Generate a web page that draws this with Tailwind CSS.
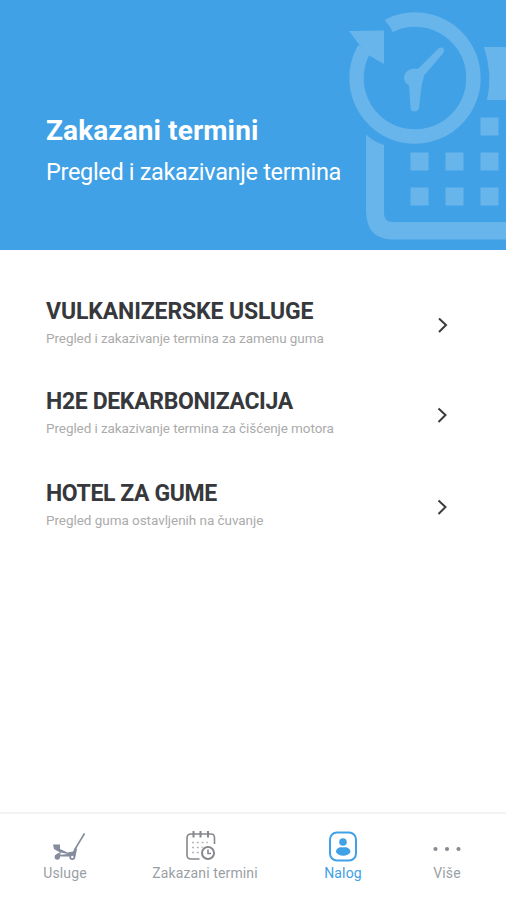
<!DOCTYPE html>
<html lang="sr">
<head>
<meta charset="utf-8">
<title>Zakazani termini</title>
<script src="https://cdn.jsdelivr.net/npm/@tailwindcss/browser@4"></script>
</head>
<body class="bg-white font-['Roboto',sans-serif]">
<div class="flex h-[900px] w-[506px] flex-col overflow-hidden bg-white">
  <header class="relative h-[250px] shrink-0 bg-[#40a1e6] pl-[46px] pt-[113px] text-white">
    <svg class="absolute right-0 top-0" width="176" height="250" viewBox="330 0 176 250" fill="#68b5ec">
      <path d="M389.500 25.400A58.500 58.500 0 1 1 364.500 48.500" fill="none" stroke="#68b5ec" stroke-width="14.400"/>
      <path d="M384.500 20L394 31.500L400 28L392 17Z"/>
      <path d="M349 31L384 30.500V64L370 56L358 43Z"/>
      <path d="M438.500 48.500Q441.500 46.500 443.500 48.500Q445 51 443 53.500L424 75.500Q423.500 80 421.800 84L419 108Q418 111.500 414.500 111.500Q411 111.500 410.500 108L409 85.500Q403.500 82 404 76.500Q405.500 69 415 68.500L418 69Z"/>
      <path d="M366 134.500Q374 142 384 145V213Q384 222 393 222H506V239.500H392Q366 239 366 210Z"/>
      <path d="M484 47H506V100H487Q493 74 484 47Z"/>
      <path d="M480.500 117.500h18v18h-18zM410.500 152.500h18v18h-18zM445.500 152.500h18v18h-18zM480.500 152.500h18v18h-18zM410.500 187.500h18v18h-18zM445.500 187.500h18v18h-18zM480.500 187.500h18v18h-18z"/>
    </svg>
    <h1 class="relative text-[28px] font-bold leading-[35px] tracking-[0.1px]">Zakazani termini</h1>
    <p class="relative mt-[7px] text-[23.500px] leading-[34px] tracking-[-0.33px]">Pregled i zakazivanje termina</p>
  </header>

  <main class="flex grow flex-col pl-[46px] pr-[56px] pt-[47px]">
    <a class="flex h-[90px] justify-between">
      <div>
        <h2 class="text-[23px] font-bold leading-[30px] tracking-[-0.13px] text-[#36383c]">VULKANIZERSKE USLUGE</h2>
        <p class="mt-px text-[13.500px] leading-5 tracking-[-0.08px] text-[#ababab]">Pregled i zakazivanje termina za zamenu guma</p>
      </div>
      <svg class="mt-[20px]" width="14" height="16" viewBox="0 0 14 16" fill="none" stroke="#3a3b3e" stroke-width="2"><path d="M3 1.500L10 8L3 15"/></svg>
    </a>
    <a class="flex h-[92px] justify-between">
      <div>
        <h2 class="text-[23px] font-bold leading-[30px] tracking-[-0.35px] text-[#36383c]">H2E DEKARBONIZACIJA</h2>
        <p class="mt-px text-[13.500px] leading-5 tracking-[-0.08px] text-[#ababab]">Pregled i zakazivanje termina za čišćenje motora</p>
      </div>
      <svg class="mt-[20px]" width="14" height="16" viewBox="0 0 14 16" fill="none" stroke="#3a3b3e" stroke-width="2"><path d="M2.500 1.500L9.500 8L2.500 15"/></svg>
    </a>
    <a class="flex justify-between">
      <div>
        <h2 class="text-[23px] font-bold leading-[30px] tracking-[-0.4px] text-[#36383c]">HOTEL ZA GUME</h2>
        <p class="mt-px text-[13.500px] leading-5 tracking-[-0.05px] text-[#ababab]">Pregled guma ostavljenih na čuvanje</p>
      </div>
      <svg class="mt-[20px]" width="14" height="16" viewBox="0 0 14 16" fill="none" stroke="#3a3b3e" stroke-width="2"><path d="M2.500 1.500L9.500 8L2.500 15"/></svg>
    </a>
  </main>

  <nav class="flex h-[88px] shrink-0 border-t-2 border-[#f3f3f3] pt-[16px] text-[14px] leading-5 tracking-[0.12px] text-[#9a9fa6]">
    <a class="flex w-[130px] flex-col items-center">
      <svg width="40" height="33" viewBox="45 830 40 33">
        <path d="M84.500 833.500L74.500 850" fill="none" stroke="#858c9b" stroke-width="1.600"/>
        <path d="M53 844.500H60V849L67.500 852.500L73 851.500L75.500 847.500L77 849L75.500 856.500H56.500V854L60 852.500L54 849Z" fill="#858c9b"/>
        <path d="M60.500 852.400L68 854L60.500 854.800Z" fill="#fff"/>
        <circle cx="57.300" cy="857" r="2.700" fill="#858c9b"/><circle cx="72.300" cy="857" r="3" fill="#858c9b"/><circle cx="72.300" cy="857" r="1.200" fill="#fff"/>
      </svg>
      <span>Usluge</span>
    </a>
    <a class="flex w-[150px] flex-col items-center">
      <svg width="40" height="33" viewBox="185 830 40 33" fill="none" stroke="#85888d" stroke-width="1.600">
        <path d="M199.500 859H191Q187 859 187 855V838Q187 834 191 834H211Q214.500 834 214.500 838V844"/>
        <path d="M193.500 831V837.500M200.500 831V837.500M208 831V837.500" stroke-width="2"/>
        <path d="M192 842.500H208M192 847.500H204M192 852.500H199" stroke="#b4b6b9" stroke-dasharray="2 2.800"/>
        <circle cx="208" cy="853" r="7.500" fill="#fff" stroke="none"/>
        <circle cx="208" cy="853" r="6" stroke-width="2"/><path d="M208 849.500V853.500H211"/>
      </svg>
      <span>Zakazani termini</span>
    </a>
    <a class="flex w-[126px] flex-col items-center text-[#40a1e6]">
      <svg width="30" height="33" viewBox="328 830 30 33" fill="#40a1e6">
        <rect x="330" y="832.500" width="26" height="28" rx="7" fill="none" stroke="#40a1e6" stroke-width="2"/>
        <circle cx="343" cy="842" r="3.800"/>
        <path d="M336 852C336 848 340 846.500 343 847.500C346 846.500 350.500 848 350.500 852C348 857 338.500 857 336 852Z"/>
      </svg>
      <span>Nalog</span>
    </a>
    <a class="flex w-[82px] flex-col items-center">
      <svg width="30" height="33" viewBox="432 830 30 33" fill="#888b90">
        <circle cx="435.500" cy="849" r="2.100"/><circle cx="447" cy="849" r="2.100"/><circle cx="458.500" cy="849" r="2.100"/>
      </svg>
      <span>Više</span>
    </a>
  </nav>
</div>
</body>
</html>
